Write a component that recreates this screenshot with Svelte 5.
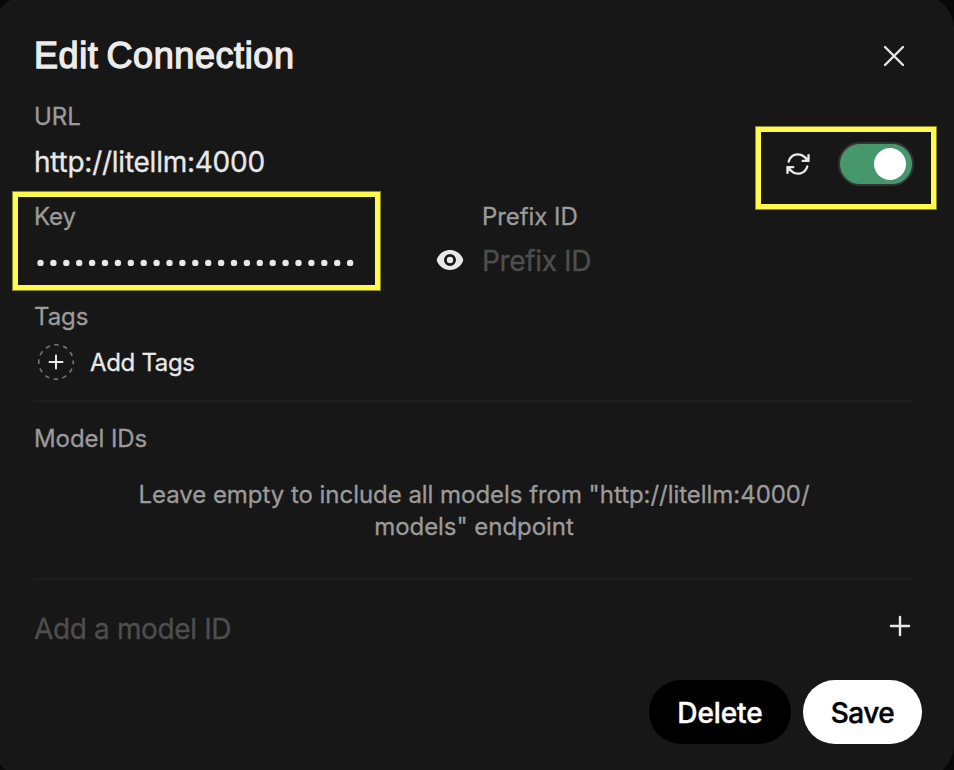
<script>
  let url = $state('http://litellm:4000');
  let enabled = $state(true);
  const keyDots = Array.from({ length: 25 });
</script>

<div class="viewport">
  <section class="dialog">
    <header>
      <h1>Edit Connection</h1>
      <button class="icon close" aria-label="Close">
        <svg width="22" height="22" viewBox="0 0 22 22"><path d="M2 2 20 20M20 2 2 20" /></svg>
      </button>
    </header>

    <div class="url-row">
      <div class="field">
        <div class="label url-label"><span>URL</span></div>
        <div class="value url-value"><span>{url}</span></div>
      </div>
      <div class="controls">
        <button class="icon" aria-label="Verify connection">
          <svg width="28" height="28" viewBox="0 0 24 24" class="refresh">
            <path d="M16.023 9.348h4.992v-.001M2.985 19.644v-4.992m0 0h4.992m-4.993 0 3.181 3.183a8.25 8.25 0 0 0 13.803-3.7M4.031 9.865a8.25 8.25 0 0 1 13.803-3.7l3.181 3.182m0-4.991v4.99" />
          </svg>
        </button>
        <button class="switch" class:on={enabled} aria-label="Enabled" onclick={() => (enabled = !enabled)}>
          <i></i>
        </button>
        <div class="mark mark-switch"></div>
      </div>
    </div>

    <div class="key-row">
      <div class="key">
        <div class="label key-label"><span>Key</span></div>
        <svg class="secret" width="330" height="12" viewBox="0 0 330 12">
          {#each keyDots as _, i}<circle cx={6.5 + i * 12.9} cy="5.9" r="3.2" />{/each}
        </svg>
        <div class="mark mark-key"></div>
      </div>
      <button class="icon eye" aria-label="Show key">
        <svg width="28" height="22" viewBox="0 0 28 22">
          <path fill-rule="evenodd" d="M14 1C7.800 1 2.800 5 .9 10.200a2.200 2.200 0 0 0 0 1.600C2.800 17 7.800 21 14 21s11.200-4 13.100-9.200a2.200 2.200 0 0 0 0-1.600C25.200 5 20.200 1 14 1Zm0 4a6 6 0 1 1 0 12 6 6 0 0 1 0-12Z" />
          <circle cx="14" cy="11" r="3.200" />
        </svg>
      </button>
      <div class="prefix">
        <div class="label prefix-label"><span>Prefix ID</span></div>
        <div class="value muted prefix-value"><span>Prefix ID</span></div>
      </div>
    </div>

    <div class="label tags-label"><span>Tags</span></div>
    <div class="tags">
      <svg width="38" height="38" viewBox="0 0 38 38">
        <circle cx="19" cy="19" r="17.200" />
        <path d="M12.500 19h13M19 12.500v13" />
      </svg>
      <span class="add-tags">Add Tags</span>
    </div>

    <hr />

    <div class="label models-label"><span>Model IDs</span></div>
    <p><span class="l1">Leave empty to include all models from "{url}/</span><br /><span class="l2">models" endpoint</span></p>

    <hr />

    <div class="add-model">
      <div class="value muted model-value"><span>Add a model ID</span></div>
      <button class="icon" aria-label="Add model">
        <svg width="22" height="22" viewBox="0 0 22 22"><path d="M2 11h18M11 2v18" /></svg>
      </button>
    </div>

    <footer>
      <button class="pill delete"><span>Delete</span></button>
      <button class="pill save"><span>Save</span></button>
    </footer>
  </section>
</div>

<style>
  :global(body) { background: #080808; }
  .viewport {
    width: 954px;
    height: 770px;
    overflow: hidden;
    background: #080808;
    font-family: Inter, "Liberation Sans", sans-serif;
    color: #e8e8e8;
  }
  .dialog {
    box-sizing: border-box;
    width: 960px;
    height: 781px;
    margin: -4px 0 0 -6px;
    padding: 36px 40px 0;
    border-radius: 32px;
    background: #171717;
    display: flex;
    flex-direction: column;
  }
  button { border: 0; padding: 0; margin: 0; background: none; font: inherit; color: inherit; }
  svg { display: block; }
  .icon svg { fill: none; stroke: #e8e8e8; stroke-width: 2.400; stroke-linecap: round; stroke-linejoin: round; }
  header { display: flex; justify-content: space-between; height: 48px; }
  h1 {
    margin: 0;
    font: 400 36px/48px "Liberation Sans", Arial, sans-serif;
    letter-spacing: .6px;
    word-spacing: -2.600px;
    color: #ececec;
    -webkit-text-stroke: 1.300px #ececec;
  }
  .close { width: 22px; margin-right: 9px; }
  .label, .value, p, .add-tags { -webkit-text-stroke: .3px currentColor; }
  .label { height: 32px; font-size: 24px; line-height: 32px; color: #9b9b9b; letter-spacing: -.06px; }
  .value { height: 40px; font-size: 28px; line-height: 40px; white-space: nowrap; letter-spacing: -.36px; }
  .muted { color: #4e4e4e; }
  .url-row { display: flex; justify-content: space-between; height: 104px; padding-top: 21px; box-sizing: border-box; }
  .url-value { margin-top: 9px; letter-spacing: -.25px; }
  .controls { position: relative; display: flex; align-items: center; height: 44px; margin-top: 41px; gap: 26px; }
  .controls .refresh { stroke-width: 2; }
  .switch { box-sizing: border-box; width: 76px; height: 44px; border: 2px solid #333; border-radius: 22px; background: #333; display: flex; align-items: center; padding: 0 6px; }
  .switch.on { background: #46976b; justify-content: flex-end; }
  .switch i { width: 32px; height: 32px; border-radius: 50%; background: #fff; }
  .mark { position: absolute; box-sizing: border-box; border: 6px solid #fffb4e; outline: 1px solid #8a872f; outline-offset: -1px; pointer-events: none; }
  .mark-switch { left: -29px; top: -16px; width: 182px; height: 84px; }
  .mark-key { left: -22px; top: -10px; width: 369px; height: 100px; }
  .key-row { display: flex; height: 97px; padding-top: 17px; box-sizing: border-box; }
  .key { position: relative; width: 402px; }
  .secret { margin-top: 24px; fill: #e8e8e8; }
  .eye { width: 28px; height: 22px; margin: 48px 18px 0 0; }
  .eye svg { fill: #e8e8e8; stroke: none; }
  .prefix-value { margin-top: 8px; }
  .tags-label { margin-top: 20px; }
  .tags { display: flex; align-items: center; height: 38px; margin: 10px 0 19px 3px; gap: 15px; font-size: 24px; letter-spacing: -.33px; }
  .tags svg { fill: none; stroke: #e8e8e8; stroke-width: 2; stroke-linecap: round; }
  .tags circle { stroke: #777; stroke-width: 1.600; stroke-dasharray: 4.500 4.506; stroke-dashoffset: 2.250; stroke-linecap: butt; }
  hr { width: 880px; height: 2px; margin: 0; border: 0; background: #1e1e1e; flex: none; }
  .models-label { margin-top: 21px; }
  p { margin: 24px 0 35px; font-size: 24px; line-height: 32px; text-align: center; color: #9b9b9b; white-space: nowrap; letter-spacing: -.04px; }
  .add-model { display: flex; justify-content: space-between; align-items: flex-start; padding: 29px 3px 0 0; height: 100px; box-sizing: border-box; }
  .add-model .icon { margin-top: 6px; }
  footer { display: flex; justify-content: flex-end; gap: 12px; margin-right: -8px; }
  .pill { height: 64px; border-radius: 32px; font-size: 28px; font-weight: 500; padding-top: 2px; letter-spacing: -.1px; }
  .delete { width: 142px; background: #000; color: #fff; -webkit-text-stroke: .4px #fff; }
  .save { width: 119px; background: #fff; color: #000; letter-spacing: -.5px; -webkit-text-stroke: .4px #000; }
</style>
